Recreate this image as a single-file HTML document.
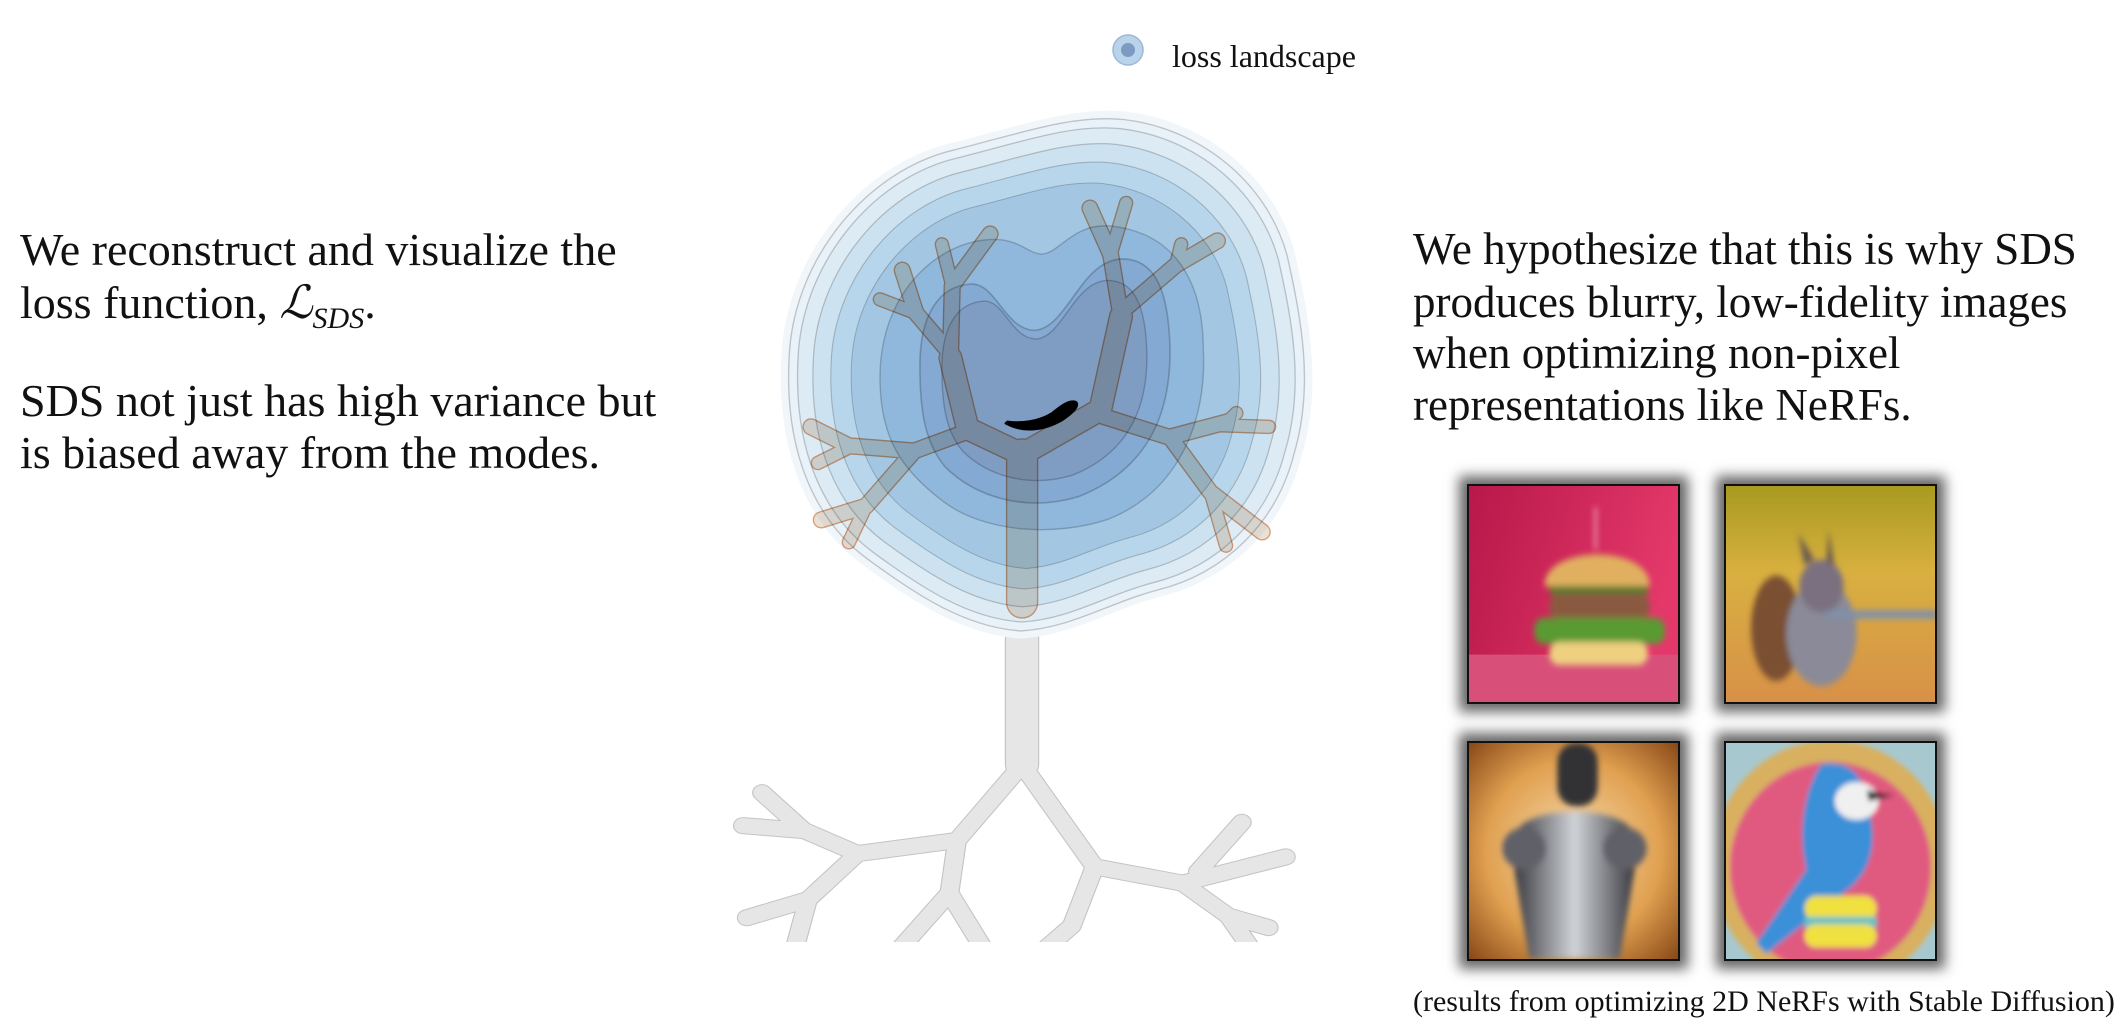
<!DOCTYPE html>
<html><head><meta charset="utf-8">
<style>
html,body{margin:0;padding:0;background:#fff;}
body{width:2124px;height:1031px;position:relative;overflow:hidden;font-family:"Liberation Serif",serif;color:#111;}
.t{position:absolute;white-space:nowrap;font-size:46px;line-height:1;}
.img{position:absolute;width:209px;height:216px;border:2px solid #111;box-shadow:0 0 12px 8px rgba(0,0,0,.6);overflow:hidden;}
.img svg{display:block;width:209px;height:216px;}
</style></head><body>

<svg width="2124" height="1031" style="position:absolute;left:0;top:0">
<defs>
<path id="blob" d="M 20,700 C 40,420 250,170 500,110 C 700,60 850,5 1000,20 C 1220,45 1420,200 1480,420 C 1520,600 1560,800 1500,1000 C 1450,1200 1300,1350 1100,1400 C 950,1440 850,1510 700,1520 C 540,1510 400,1420 250,1310 C 100,1200 0,1000 20,700 Z"/>
<path id="h1" d="M 300,800 C 290,550 450,400 600,385 C 700,375 720,430 765,425 C 810,420 850,340 950,345 C 1120,360 1220,480 1220,700 C 1230,900 1150,1100 950,1180 C 800,1230 600,1220 480,1130 C 360,1040 305,950 300,800 Z"/>
<path id="h2" d="M 470,750 C 470,620 520,560 590,555 C 650,550 670,660 740,665 C 820,665 850,500 950,495 C 1020,495 1060,550 1065,700 C 1070,880 1000,1000 850,1060 C 720,1100 600,1060 530,990 C 480,930 470,850 470,750 Z"/>
</defs>

<g transform="matrix(0.3823,0,0,0.329,720,620)" fill="none" stroke-linecap="round" stroke-linejoin="round">
 <g stroke="#c4c4c4">
  <path d="M790,-200 L790,440" stroke-width="90"/>
  <path d="M790,440 L620,670 L360,710 L220,640 L110,525 M220,640 L60,625 M360,710 L230,850 L70,905 M230,850 L195,1000 M620,670 L600,830 L470,1000 M600,830 L690,1000 M790,440 L980,750 L1210,800 L1480,720 M1250,765 L1365,615 M1210,800 L1330,900 L1435,935 M1330,900 L1390,1000 M980,750 L920,930 L850,1000" stroke-width="52"/>
 </g>
 <g stroke="#e6e6e6">
  <path d="M790,-200 L790,440" stroke-width="84"/>
  <path d="M790,440 L620,670 L360,710 L220,640 L110,525 M220,640 L60,625 M360,710 L230,850 L70,905 M230,850 L195,1000 M620,670 L600,830 L470,1000 M600,830 L690,1000 M790,440 L980,750 L1210,800 L1480,720 M1250,765 L1365,615 M1210,800 L1330,900 L1435,935 M1330,900 L1390,1000 M980,750 L920,930 L850,1000" stroke-width="46"/>
 </g>
</g>
<rect x="700" y="942" width="700" height="90" fill="#fff"/>

<g transform="translate(780,110) scale(0.3444)" stroke="rgba(0,0,0,0.2)" stroke-width="4">
 <use href="#blob" fill="#f1f6fb" stroke="none" transform="translate(760,780) scale(1.02) translate(-760,-780)"/>
 <use href="#blob" fill="#e9f2f9" transform="translate(760,780) scale(0.99) translate(-760,-780)"/>
 <use href="#blob" fill="#ddebf5" transform="translate(760,780) scale(0.955) translate(-760,-780)"/>
 <use href="#blob" fill="#cde2f0" transform="translate(760,780) scale(0.895) translate(-760,-780)"/>
 <use href="#blob" fill="#b8d6eb" transform="translate(760,780) scale(0.825) translate(-760,-780)"/>
 <use href="#blob" fill="#a3c7e3" transform="translate(760,780) scale(0.745) translate(-760,-780)"/>
 <use href="#h1" fill="#90b8dc" transform="translate(760,780) scale(1.02) translate(-760,-780)"/>
 <use href="#h2" fill="#84a9d2" transform="translate(760,780) scale(1.22) translate(-760,-780)"/>
 <use href="#h2" fill="#7f9cc2"/>
</g>

<g transform="translate(780,110) scale(0.3444)" fill="none" stroke-linecap="round" stroke-linejoin="round" style="mix-blend-mode:multiply">
 <g stroke="#dc9d78">
  <path d="M703,1430 L703,1000" stroke-width="94"/>
  <path d="M703,1000 L545,925 L495,720 M703,1000 L930,870 L990,600" stroke-width="70"/>
  <path d="M495,720 L500,510 L610,360 M480,690 L395,590 L355,465 M990,600 L960,420 L900,285 M1010,570 L1150,450 L1270,380 M540,935 L390,990 L200,975 L90,920 M390,990 L250,1150 L120,1190 M940,890 L1130,950 L1300,905 M1140,960 L1250,1110 L1400,1225" stroke-width="50"/>
  <path d="M500,510 L470,390 M395,590 L290,550 M960,420 L1005,270 M1150,450 L1165,390 M200,980 L110,1025 M250,1150 L200,1255 M1270,915 L1420,920 M1300,905 L1325,880 M1250,1110 L1295,1265" stroke-width="42"/>
 </g>
 <g stroke="#ebe0d4">
  <path d="M703,1430 L703,1000" stroke-width="86"/>
  <path d="M703,1000 L545,925 L495,720 M703,1000 L930,870 L990,600" stroke-width="62"/>
  <path d="M495,720 L500,510 L610,360 M480,690 L395,590 L355,465 M990,600 L960,420 L900,285 M1010,570 L1150,450 L1270,380 M540,935 L390,990 L200,975 L90,920 M390,990 L250,1150 L120,1190 M940,890 L1130,950 L1300,905 M1140,960 L1250,1110 L1400,1225" stroke-width="42"/>
  <path d="M500,510 L470,390 M395,590 L290,550 M960,420 L1005,270 M1150,450 L1165,390 M200,980 L110,1025 M250,1150 L200,1255 M1270,915 L1420,920 M1300,905 L1325,880 M1250,1110 L1295,1265" stroke-width="34"/>
 </g>
 <path d="M655,910 C 700,935 760,935 820,900 C 850,880 870,860 860,848 C 840,840 815,860 790,880 C 750,905 700,910 660,905 Z" fill="#000" stroke="#000" stroke-width="6"/>
</g>

<circle cx="1128" cy="50" r="15" fill="#b9d3ea" stroke="#9bb8d6" stroke-width="1.5"/>
<circle cx="1128" cy="50" r="7" fill="#7d9bc2"/>
</svg>

<div class="t" style="left:1172px;top:40px;font-size:32px;">loss landscape</div>

<div class="t" style="left:20px;top:227px;">We reconstruct and visualize the</div>
<div class="t" style="left:20px;top:280px;">loss function, <i>ℒ<sub style="font-size:30px;">SDS</sub></i>.</div>
<div class="t" style="left:20px;top:378px;">SDS not just has high variance but</div>
<div class="t" style="left:20px;top:430px;">is biased away from the modes.</div>

<div class="t" style="left:1413px;top:227px;font-size:45px;">We hypothesize that this is why SDS</div>
<div class="t" style="left:1413px;top:280px;font-size:45px;">produces blurry, low-fidelity images</div>
<div class="t" style="left:1413px;top:331px;font-size:45px;">when optimizing non-pixel</div>
<div class="t" style="left:1413px;top:383px;font-size:45px;">representations like NeRFs.</div>

<div class="img" style="left:1467px;top:484px;">
<svg viewBox="0 0 208 205" preserveAspectRatio="none"><defs><filter id="b1"><feGaussianBlur stdDeviation="3"/></filter>
<linearGradient id="g1" x1="0" y1="0" x2="1" y2="0.3"><stop offset="0" stop-color="#b8184a"/><stop offset="1" stop-color="#e4386a"/></linearGradient></defs>
<rect width="208" height="205" fill="url(#g1)"/><rect y="160" width="208" height="45" fill="#d8507a"/>
<g filter="url(#b1)"><rect x="125" y="20" width="2" height="40" fill="#f4c0c8"/>
<path d="M75,95 C75,55 180,55 180,95 Z" fill="#e0b060"/>
<rect x="80" y="95" width="98" height="8" fill="#5a7a2a"/>
<rect x="80" y="102" width="100" height="25" rx="12" fill="#8a5a40"/>
<rect x="65" y="125" width="130" height="25" rx="10" fill="#5a9a30"/>
<rect x="80" y="148" width="98" height="22" rx="10" fill="#eed080"/></g>
</svg></div>

<div class="img" style="left:1724px;top:484px;">
<svg viewBox="0 0 208 205" preserveAspectRatio="none"><defs><filter id="b2"><feGaussianBlur stdDeviation="3"/></filter>
<linearGradient id="g2" x1="0" y1="0" x2="0" y2="1"><stop offset="0" stop-color="#a89a20"/><stop offset="0.4" stop-color="#d8b040"/><stop offset="1" stop-color="#d89048"/></linearGradient></defs>
<rect width="208" height="205" fill="url(#g2)"/>
<g filter="url(#b2)"><ellipse cx="50" cy="135" rx="25" ry="50" fill="#7a5030"/>
<ellipse cx="95" cy="140" rx="35" ry="50" fill="#8a8a98"/>
<ellipse cx="95" cy="95" rx="22" ry="25" fill="#7a7080"/>
<path d="M78,75 L72,45 L88,70 Z M100,72 L102,42 L108,75 Z" fill="#6a5a50"/>
<rect x="100" y="118" width="110" height="8" fill="#8090a8"/></g>
</svg></div>

<div class="img" style="left:1467px;top:741px;">
<svg viewBox="0 0 208 205" preserveAspectRatio="none"><defs><filter id="b3"><feGaussianBlur stdDeviation="3"/></filter>
<radialGradient id="g3" cx="0.5" cy="0.5" r="0.7"><stop offset="0" stop-color="#f8dcb0"/><stop offset="0.6" stop-color="#e0a050"/><stop offset="1" stop-color="#8a4a18"/></radialGradient>
<linearGradient id="m3" x1="0" y1="0" x2="1" y2="0"><stop offset="0" stop-color="#3a3a40"/><stop offset="0.5" stop-color="#d0d4d8"/><stop offset="1" stop-color="#3a3a40"/></linearGradient></defs>
<rect width="208" height="205" fill="url(#g3)"/>
<g filter="url(#b3)"><rect x="88" y="0" width="40" height="60" rx="18" fill="#303036"/>
<path d="M50,80 C70,60 140,60 160,80 L165,120 L150,205 L60,205 L45,120 Z" fill="url(#m3)"/>
<ellipse cx="55" cy="100" rx="22" ry="20" fill="#606068"/><ellipse cx="155" cy="100" rx="22" ry="20" fill="#606068"/></g>
</svg></div>

<div class="img" style="left:1724px;top:741px;">
<svg viewBox="0 0 208 205" preserveAspectRatio="none"><defs><filter id="b4"><feGaussianBlur stdDeviation="2.5"/></filter></defs>
<rect width="208" height="205" fill="#a8c8d0"/>
<g filter="url(#b4)"><circle cx="104" cy="115" r="118" fill="#d8b060"/>
<circle cx="104" cy="118" r="100" fill="#e05a80"/>
<path d="M95,20 C130,15 140,40 140,60 C150,80 150,120 120,140 L40,200 L30,190 L80,120 C70,80 80,40 95,20 Z" fill="#3a90d8"/>
<ellipse cx="130" cy="55" rx="22" ry="18" fill="#f0f0f0"/>
<path d="M140,45 L168,50 L142,55 Z" fill="#222"/>
<rect x="78" y="145" width="72" height="24" rx="12" fill="#f0e040"/>
<rect x="78" y="165" width="72" height="10" fill="#60c0c8"/>
<rect x="78" y="172" width="72" height="22" rx="11" fill="#f0e040"/></g>
</svg></div>

<div class="t" style="left:1413px;top:987px;font-size:30px;">(results from optimizing 2D NeRFs with Stable Diffusion)</div>
</body></html>
